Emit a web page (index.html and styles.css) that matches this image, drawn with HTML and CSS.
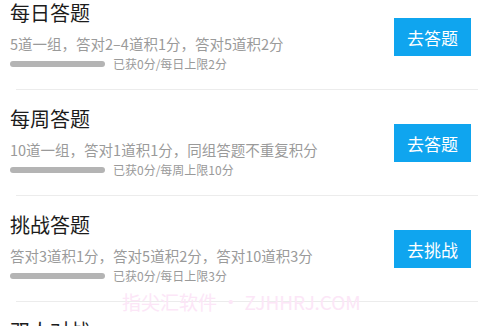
FILE: index.html
```html
<!DOCTYPE html>
<html lang="zh-CN">
<head>
<meta charset="utf-8">
<title>答题</title>
<link rel="stylesheet" href="styles.css">
</head>
<body>
<div class="list">
  <div class="item first">
    <div class="info">
      <div class="title">每日答题</div>
      <div class="desc">5道一组，答对2–4道积1分，答对5道积2分</div>
      <div class="meta"><span class="bar"></span><span class="score">已获0分/每日上限2分</span></div>
    </div>
    <div class="btn">去答题</div>
  </div>
  <div class="divider"></div>
  <div class="item">
    <div class="info">
      <div class="title">每周答题</div>
      <div class="desc">10道一组，答对1道积1分，同组答题不重复积分</div>
      <div class="meta"><span class="bar"></span><span class="score">已获0分/每周上限10分</span></div>
    </div>
    <div class="btn">去答题</div>
  </div>
  <div class="divider"></div>
  <div class="item">
    <div class="info">
      <div class="title">挑战答题</div>
      <div class="desc">答对3道积1分，答对5道积2分，答对10道积3分</div>
      <div class="meta"><span class="bar"></span><span class="score">已获0分/每日上限3分</span></div>
    </div>
    <div class="btn">去挑战</div>
  </div>
  <div class="divider"></div>
  <div class="item">
    <div class="info">
      <div class="title">双人对战</div>
    </div>
  </div>
</div>
<div class="watermark">指尖汇软件 • ZJHHRJ.COM</div>
</body>
</html>
```
FILE: styles.css
```css
html, body {
  margin: 0;
  padding: 0;
  background: #ffffff;
  width: 478px;
  height: 326px;
  overflow: hidden;
  font-family: "Noto Sans CJK SC", "Noto Sans", sans-serif;
}
.list {
  margin-top: -16px;
}
.item {
  display: flex;
  align-items: center;
  justify-content: space-between;
  padding: 17px 7px 16px 10px;
}
.info {
  display: flex;
  flex-direction: column;
}
.title {
  font-size: 20px;
  line-height: 24px;
  color: #1c1c1c;
}
.desc {
  margin-top: 8px;
  font-size: 14.5px;
  line-height: 22px;
  color: #9a9a9a;
}
.meta {
  display: flex;
  align-items: center;
  height: 18px;
}
.bar {
  width: 95px;
  height: 6px;
  border-radius: 3px;
  background: #b4b4b4;
}
.score {
  margin-left: 8px;
  font-size: 12px;
  line-height: 18px;
  color: #9a9a9a;
}
.btn {
  width: 77px;
  height: 38px;
  background: #0fa5ef;
  color: #ffffff;
  font-size: 17px;
  display: flex;
  align-items: center;
  justify-content: center;
}
.divider {
  height: 1px;
  margin-left: 16px;
  background: #ececec;
}
.watermark {
  position: absolute;
  left: 122px;
  top: 289px;
  font-size: 19px;
  line-height: 26px;
  color: #fce6f7;
  white-space: nowrap;
}
```
